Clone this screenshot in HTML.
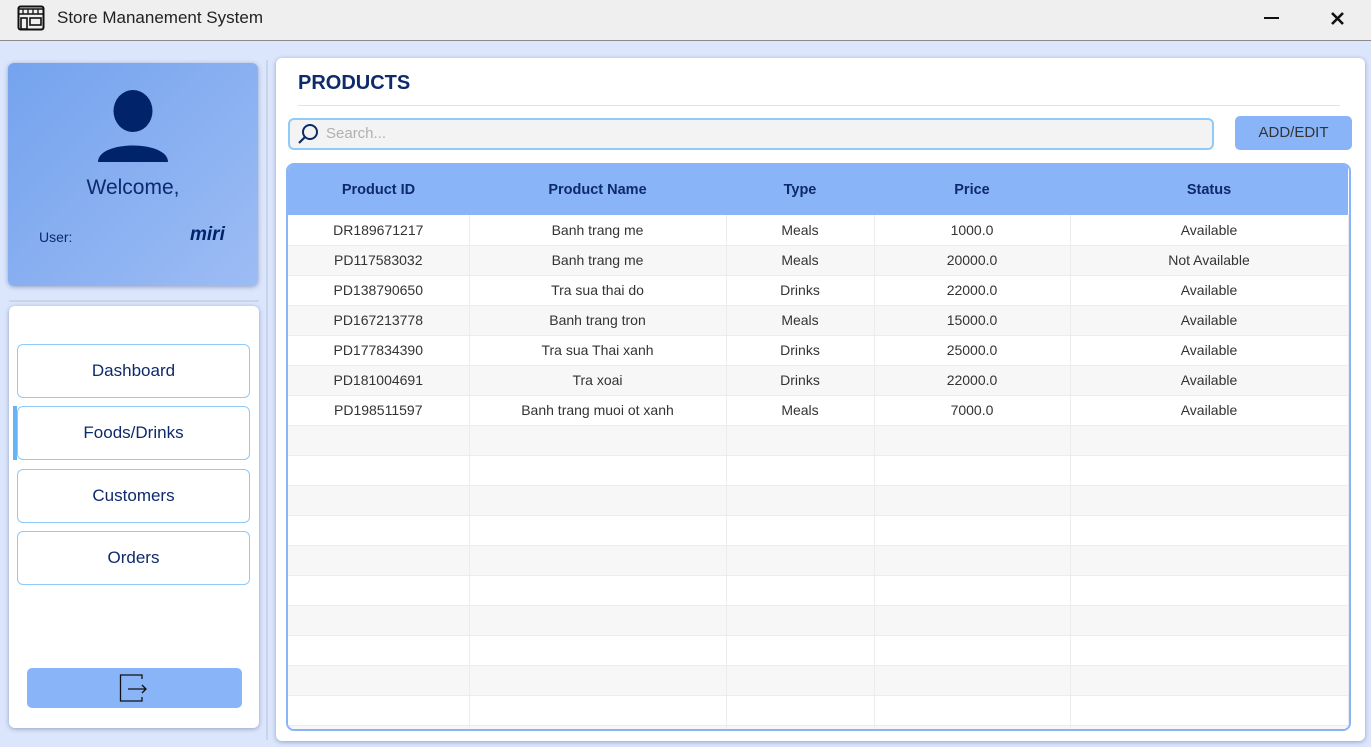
<!DOCTYPE html>
<html><head><meta charset="utf-8"><style>
*{box-sizing:border-box;margin:0;padding:0}
body{width:1371px;height:747px;overflow:hidden;background:#dbe6fc;font-family:"Liberation Sans",sans-serif;position:relative}
.tb{position:absolute;left:0;top:0;width:1371px;height:41px;background:#efefef;border-bottom:1px solid #8a8a8a}
.tb .t{position:absolute;left:57px;top:8px;font-size:17px;color:#222}
.abs{position:absolute}
.card{position:absolute;left:8px;top:63px;width:250px;height:223px;border-radius:6px;background:linear-gradient(135deg,#74a3ee,#9dbcf4);box-shadow:0 1px 5px rgba(60,80,130,.45)}
.nav{position:absolute;left:9px;top:306px;width:250px;height:422px;border-radius:6px;background:#fff;box-shadow:0 1px 5px rgba(60,80,130,.45)}
.btn{position:absolute;left:17px;width:233px;height:54px;border:1.5px solid #8fcaf8;border-radius:6px;background:#fff;color:#0d2a6b;font-size:17px;text-align:center;line-height:51px}
.main{position:absolute;left:276px;top:58px;width:1089px;height:683px;border-radius:6px;background:#fff;box-shadow:0 1px 5px rgba(60,80,130,.45)}
table{border-collapse:collapse;table-layout:fixed;width:1060px}
td,th{height:30px;text-align:center;font-size:14px;color:#333;border-right:1px solid #ececec;border-bottom:1px solid #ececec}
th{height:50px;background:#8ab4f8;color:#0d2a6b;font-weight:bold;font-size:14.5px;border:none}
tr:nth-child(odd) td{background:#f7f7f7}
</style></head><body>
<div class="tb">
<svg class="abs" style="left:17px;top:5px" width="28" height="26" viewBox="0 0 28 26"><rect x="1.5" y="1.5" width="25" height="23" rx="2" fill="none" stroke="#111" stroke-width="2"/><rect x="1.5" y="4" width="25" height="5" fill="none" stroke="#111" stroke-width="1.5"/><path d="M6 4v5M11 4v5M16 4v5M21 4v5" stroke="#111" stroke-width="1.3"/><rect x="4" y="13" width="6" height="11" fill="none" stroke="#111" stroke-width="1.6"/><rect x="13" y="13" width="11" height="7" fill="none" stroke="#111" stroke-width="1.6"/></svg>
<div class="t">Store Mananement System</div>
<div class="abs" style="left:1264px;top:17px;width:15px;height:2px;background:#111"></div>
<svg class="abs" style="left:1330px;top:11px" width="15" height="15" viewBox="0 0 15 15"><path d="M2 2L13 13M13 2L2 13" stroke="#111" stroke-width="2.6"/></svg>
</div>
<div class="card">
<svg class="abs" style="left:89px;top:27px" width="72" height="74" viewBox="0 0 72 74"><ellipse cx="36" cy="21" rx="19.5" ry="21" fill="#00236a"/><path d="M1 72 C1 50 71 50 71 72 Z" fill="#00236a"/></svg>
<div class="abs" style="left:0;width:250px;top:113px;text-align:center;font-size:21px;color:#0d2a6b">Welcome,</div>
<div class="abs" style="left:31px;top:166px;font-size:14px;color:#0d2a6b">User:</div>
<div class="abs" style="left:182px;top:161px;font-size:19px;font-weight:bold;font-style:italic;color:#00236a">miri</div>
</div>
<div class="abs" style="left:9px;top:300px;width:250px;height:2px;background:#c9d4ea"></div>
<div class="abs" style="left:266px;top:60px;width:2px;height:680px;background:#c9d4ea"></div>
<div class="nav"></div>
<div class="btn" style="top:344px">Dashboard</div>
<div class="btn" style="top:406px">Foods/Drinks</div>
<div class="abs" style="left:13px;top:406px;width:4px;height:54px;background:#64b4f6"></div>
<div class="btn" style="top:469px">Customers</div>
<div class="btn" style="top:531px">Orders</div>
<div class="abs" style="left:27px;top:668px;width:215px;height:40px;border-radius:5px;background:#8ab4f8"></div>
<svg class="abs" style="left:119px;top:673px" width="30" height="30" viewBox="0 0 30 30"><path d="M23 6V2H1.5V28H23V24" fill="none" stroke="#111" stroke-width="1.3"/><path d="M9 16H27M23 12L27 16L23 20" fill="none" stroke="#111" stroke-width="1.3"/></svg>
<div class="main">
<div class="abs" style="left:22px;top:14px;font-size:20px;font-weight:bold;color:#0d2a6b">PRODUCTS</div>
<div class="abs" style="left:22px;top:47px;width:1042px;height:1px;background:#e2e2e2"></div>
<div class="abs" style="left:12px;top:60px;width:926px;height:32px;border:2px solid #90caf9;border-radius:6px;background:#f3f3f3"></div>
<svg class="abs" style="left:20px;top:64px" width="24" height="24" viewBox="0 0 24 24"><circle cx="14" cy="10" r="7" fill="none" stroke="#0d2a6b" stroke-width="2"/><path d="M9 15L3 21" stroke="#0d2a6b" stroke-width="2.2"/></svg>
<div class="abs" style="left:50px;top:67px;font-size:15px;color:#b0b0b0">Search...</div>
<div class="abs" style="left:959px;top:58px;width:117px;height:34px;border-radius:5px;background:#8ab4f8;color:#333;font-size:15px;text-align:center;line-height:34px">ADD/EDIT</div>
<div class="abs" style="left:10px;top:105px;width:1065px;height:568px;border:2px solid #8ab4f8;border-radius:8px;overflow:hidden;background:#fff">
<table>
<colgroup><col style="width:181px"><col style="width:257px"><col style="width:148px"><col style="width:196px"><col style="width:278px"></colgroup>
<tr><th>Product ID</th><th>Product Name</th><th>Type</th><th>Price</th><th>Status</th></tr>
<tr><td>DR189671217</td><td>Banh trang me</td><td>Meals</td><td>1000.0</td><td>Available</td></tr>
<tr><td>PD117583032</td><td>Banh trang me</td><td>Meals</td><td>20000.0</td><td>Not Available</td></tr>
<tr><td>PD138790650</td><td>Tra sua thai do</td><td>Drinks</td><td>22000.0</td><td>Available</td></tr>
<tr><td>PD167213778</td><td>Banh trang tron</td><td>Meals</td><td>15000.0</td><td>Available</td></tr>
<tr><td>PD177834390</td><td>Tra sua Thai xanh</td><td>Drinks</td><td>25000.0</td><td>Available</td></tr>
<tr><td>PD181004691</td><td>Tra xoai</td><td>Drinks</td><td>22000.0</td><td>Available</td></tr>
<tr><td>PD198511597</td><td>Banh trang muoi ot xanh</td><td>Meals</td><td>7000.0</td><td>Available</td></tr>
<tr><td></td><td></td><td></td><td></td><td></td></tr>
<tr><td></td><td></td><td></td><td></td><td></td></tr>
<tr><td></td><td></td><td></td><td></td><td></td></tr>
<tr><td></td><td></td><td></td><td></td><td></td></tr>
<tr><td></td><td></td><td></td><td></td><td></td></tr>
<tr><td></td><td></td><td></td><td></td><td></td></tr>
<tr><td></td><td></td><td></td><td></td><td></td></tr>
<tr><td></td><td></td><td></td><td></td><td></td></tr>
<tr><td></td><td></td><td></td><td></td><td></td></tr>
<tr><td></td><td></td><td></td><td></td><td></td></tr>
<tr><td></td><td></td><td></td><td></td><td></td></tr>
</table>
</div>
</div>
</body></html>
